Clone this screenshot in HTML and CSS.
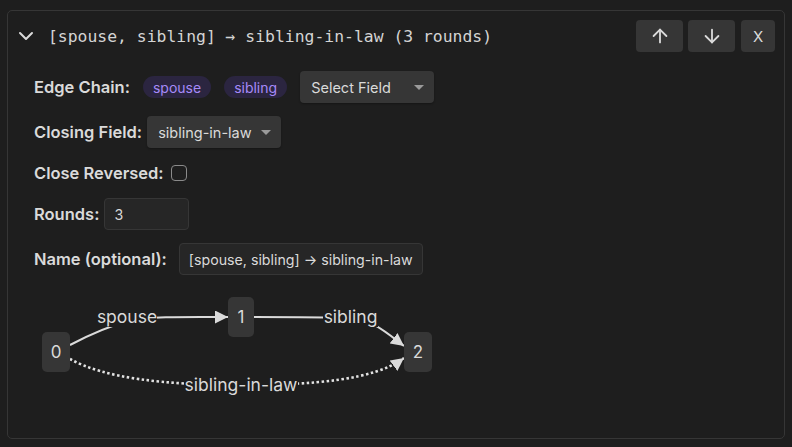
FILE: index.html
```html
<!DOCTYPE html>
<html>
<head>
<meta charset="utf-8">
<link rel="stylesheet" href="styles.css">
</head>
<body>
<div class="card">
  <div class="header">
    <svg class="chev" width="24" height="24" viewBox="0 0 24 24" fill="none" stroke="currentColor" stroke-width="2" stroke-linecap="round" stroke-linejoin="round"><path d="m6 9 6 6 6-6"/></svg>
    <div class="title">[spouse, sibling] → sibling-in-law (3 rounds)</div>
    <div class="btns">
      <button class="btn wide"><svg width="22" height="22" viewBox="0 0 24 24" fill="none" stroke="currentColor" stroke-width="2" stroke-linecap="round" stroke-linejoin="round"><path d="m5 12 7-7 7 7"/><path d="M12 19V5"/></svg></button>
      <button class="btn wide"><svg width="22" height="22" viewBox="0 0 24 24" fill="none" stroke="currentColor" stroke-width="2" stroke-linecap="round" stroke-linejoin="round"><path d="M12 5v14"/><path d="m19 12-7 7-7-7"/></svg></button>
      <button class="btn narrow">X</button>
    </div>
  </div>
  <div class="form">
    <div class="row r1">
      <span class="label">Edge Chain:</span>
      <span class="pill">spouse</span>
      <span class="pill">sibling</span>
      <div class="select"><span>Select Field</span><span class="caret"></span></div>
    </div>
    <div class="row r2">
      <span class="label">Closing Field:</span>
      <div class="select"><span>sibling-in-law</span><span class="caret"></span></div>
    </div>
    <div class="row r3">
      <span class="label">Close Reversed:</span>
      <span class="checkbox"></span>
    </div>
    <div class="row r4">
      <span class="label">Rounds:</span>
      <div class="input rounds">3</div>
    </div>
    <div class="row r5">
      <span class="label">Name (optional):</span>
      <div class="input name">[spouse, sibling] → sibling-in-law</div>
    </div>
    <svg class="graph" width="420" height="110" viewBox="0 0 420 110">
      <defs>
        <marker id="ah" viewBox="0 0 10 10" refX="10" refY="5" markerUnits="userSpaceOnUse" markerWidth="13" markerHeight="13" orient="auto">
          <path d="M0,0 L10,5 L0,10 z" fill="#dadada"/>
        </marker>
      </defs>
      <g fill="none" stroke="#dadada" stroke-width="2">
        <path d="M36 57 C 55 47, 75 38, 95 33 S 160 29, 194 29" marker-end="url(#ah)"/>
        <path d="M220 29 C 260 29, 290 29, 316 30 C 338 31, 354 46, 370 58" marker-end="url(#ah)"/>
        <path d="M36 71 C 70 90, 130 97, 207 97 C 280 97, 340 92, 370 70" stroke="#e2e2e2" stroke-width="2.6" stroke-dasharray="2.5 2.5" marker-end="url(#ah)"/>
      </g>
      <g fill="#1e1e1e">
        <rect x="63" y="19" width="60" height="20"/>
        <rect x="289" y="19" width="55" height="20"/>
        <rect x="150" y="87" width="114" height="21"/>
      </g>
      <g class="glabel">
        <text x="93" y="35">spouse</text>
        <text x="316.5" y="35">sibling</text>
        <text x="207" y="103">sibling-in-law</text>
      </g>
      <g fill="#363636">
        <rect x="8" y="44" width="28" height="40" rx="5"/>
        <rect x="194" y="9" width="26" height="40" rx="5"/>
        <rect x="370" y="44" width="28" height="40" rx="5"/>
      </g>
      <g class="nlabel">
        <text x="22" y="70">0</text>
        <text x="207" y="35">1</text>
        <text x="384" y="70">2</text>
      </g>
    </svg>
  </div>
</div>
</body>
</html>
```

FILE: styles.css
```css
* { box-sizing: border-box; }
html, body { margin: 0; padding: 0; }
body {
  background: #1e1e1e;
  color: #dadada;
  font-family: Inter, "Noto Sans", sans-serif;
  width: 792px;
  height: 447px;
  overflow: hidden;
}
.card {
  margin: 10px 7px 0 7px;
  height: 429px;
  border: 1px solid #363636;
  border-radius: 5px;
  background: #1e1e1e;
  padding: 9px 9px 0 6px;
}
.header {
  display: flex;
  align-items: center;
  height: 32px;
}
.chev { color: #dadada; flex: none; }
.title {
  margin-left: 10px;
  font-family: "DejaVu Sans Mono", "Liberation Mono", monospace;
  font-size: 16.4px;
  color: #d4d4d4;
  flex: 1;
}
.btns { display: flex; gap: 5px; }
.btn {
  height: 32px;
  border: none;
  border-radius: 4px;
  background: #363636;
  color: #dadada;
  display: flex;
  align-items: center;
  justify-content: center;
  padding: 0;
  font-family: Inter, sans-serif;
  font-size: 15px;
}
.btn.wide { width: 47px; }
.btn.narrow { width: 34px; margin-left: 1px; }
.form {
  padding-left: 20px;
  margin-top: 19px;
  display: flex;
  flex-direction: column;
  gap: 13px;
}
.row {
  display: flex;
  align-items: center;
  height: 32px;
  gap: 5px;
}
.row.r3 { height: 24px; }
.label {
  font-weight: 600;
  font-size: 16.5px;
  color: #dadada;
  white-space: nowrap;
}
.r1 { gap: 13px; }
.r1 .pill:first-of-type { margin-left: -1px; }
.r3 .checkbox { margin-left: 2px; }
.r5 .input { margin-left: 7px; }
.pill {
  height: 22px;
  padding: 0 10px;
  border-radius: 11px;
  background: #2b2540;
  color: #a68af9;
  font-size: 14px;
  display: flex;
  align-items: center;
}
.select {
  width: 134px;
  height: 32px;
  border-radius: 4px;
  background: #363636;
  box-shadow: 0 1px 2px rgba(0,0,0,0.3);
  display: flex;
  align-items: center;
  justify-content: space-between;
  padding: 0 10px 0 11px;
  font-size: 14.5px;
  color: #dadada;
  white-space: nowrap;
}
.caret {
  width: 0; height: 0;
  border-left: 5px solid transparent;
  border-right: 5px solid transparent;
  border-top: 5px solid #9a9a9a;
}
.checkbox {
  width: 16px;
  height: 16px;
  border: 1px solid #8a8a8a;
  border-radius: 4px;
}
.input {
  height: 32px;
  border: 1px solid #363636;
  border-radius: 4px;
  background: #262626;
  display: flex;
  align-items: center;
  padding: 0 9px;
  font-size: 14.2px;
  color: #dadada;
  white-space: nowrap;
}
.rounds { width: 85px; }
.name { width: 244px; }
.graph { display: block; margin-left: 0; }
.glabel text {
  font-family: Inter, sans-serif;
  font-size: 17.5px;
  fill: #dadada;
  text-anchor: middle;
}
.nlabel text {
  font-family: Inter, sans-serif;
  font-size: 17px;
  fill: #dadada;
  text-anchor: middle;
}
```
